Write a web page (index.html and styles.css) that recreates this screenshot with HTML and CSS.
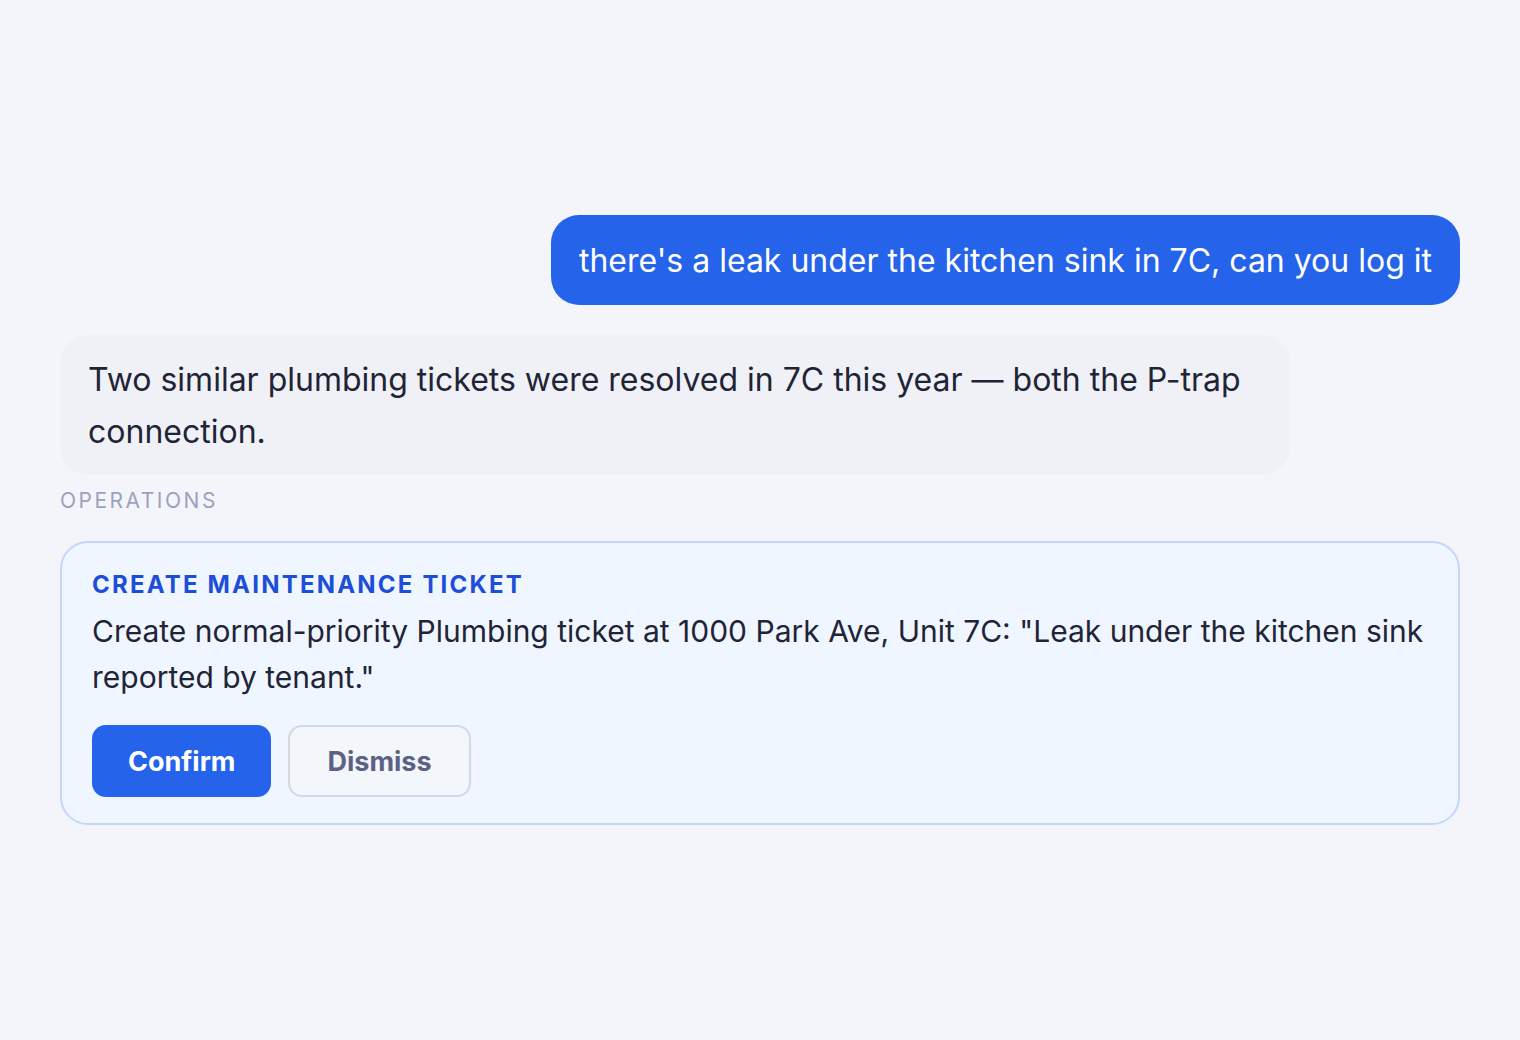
FILE: index.html
```html
<!DOCTYPE html>
<html>
<head>
<meta charset="utf-8">
<link rel="stylesheet" href="styles.css">
</head>
<body>
<div class="chat">
  <div class="row user-row">
    <div class="bubble user">there's a leak under the kitchen sink in 7C, can you log it</div>
  </div>
  <div class="row">
    <div class="bubble assistant">Two similar plumbing tickets were resolved in 7C this year — both the P-trap connection.</div>
  </div>
  <div class="section-label">OPERATIONS</div>
  <div class="card">
    <div class="card-title">CREATE MAINTENANCE TICKET</div>
    <div class="card-body">Create normal-priority Plumbing ticket at 1000 Park Ave, Unit 7C: "Leak under the kitchen sink reported by tenant."</div>
    <div class="actions">
      <button class="btn primary">Confirm</button>
      <button class="btn secondary">Dismiss</button>
    </div>
  </div>
</div>
</body>
</html>
```
FILE: styles.css
```css
* { box-sizing: border-box; }
html, body { margin: 0; padding: 0; }
body {
  background: #f3f5fa;
  font-family: Inter, "Noto Sans", sans-serif;
  width: 1520px;
  height: 1040px;
}
.chat {
  padding: 215px 60px 0 60px;
  display: flex;
  flex-direction: column;
}
.row { display: flex; }
.user-row { justify-content: flex-end; margin-bottom: 30px; }
.bubble {
  font-size: 32px;
  border-radius: 28px;
  max-width: 88%;
}
.user {
  background: #2563eb;
  color: #ffffff;
  line-height: 46px;
  padding: 23px 28px 21px 28px;
}
.assistant {
  background: #eff1f6;
  color: #1f2437;
  line-height: 52px;
  padding: 19px 28px 17px 28px;
  width: 1230px;
}
.section-label {
  margin-top: 13px;
  font-size: 21px;
  line-height: 26px;
  letter-spacing: 2.5px;
  color: #9aa2bd;
}
.card {
  margin-top: 27px;
  background: #eff6ff;
  border: 2px solid #c3d6fb;
  border-radius: 28px;
  padding: 25px 30px 26px 30px;
}
.card-title {
  font-size: 24px;
  font-weight: 700;
  letter-spacing: 2.2px;
  color: #1d4ed8;
  line-height: 34px;
}
.card-body {
  margin-top: 6px;
  font-size: 30px;
  line-height: 46px;
  color: #1f2437;
}
.actions {
  margin-top: 25px;
  display: flex;
  gap: 17px;
}
.btn {
  font-family: Inter, "Noto Sans", sans-serif;
  font-size: 27px;
  font-weight: 700;
  height: 72px;
  border-radius: 14px;
  padding: 0 36px;
  cursor: pointer;
}
.primary {
  background: #2563eb;
  color: #ffffff;
  border: none;
}
.secondary {
  background: #f3f6fb;
  color: #5b6283;
  border: 2px solid #d3d8e4;
  padding: 0 37px;
}
```
